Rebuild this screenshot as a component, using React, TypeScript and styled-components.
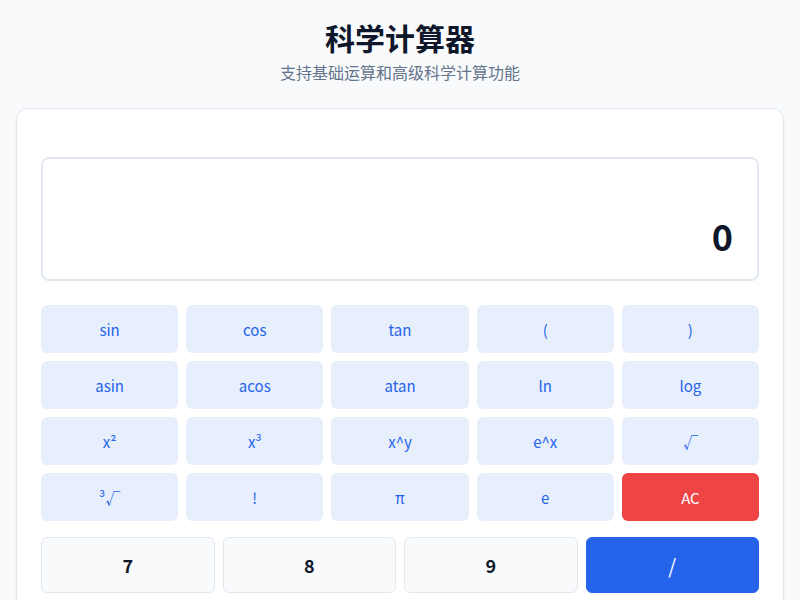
import React from 'react'
import styled, { createGlobalStyle } from 'styled-components'

const GlobalStyle = createGlobalStyle`
  html, body {
    margin: 0;
    padding: 0;
    background: #f8fafc;
    font-family: "Noto Sans CJK SC", "Noto Sans", sans-serif;
    color: #0f172a;
  }
`

type Variant = 'fn' | 'danger'

const sciKeys: { label: string; variant?: Variant }[] = [
  { label: 'sin' }, { label: 'cos' }, { label: 'tan' }, { label: '(' }, { label: ')' },
  { label: 'asin' }, { label: 'acos' }, { label: 'atan' }, { label: 'ln' }, { label: 'log' },
  { label: 'x²' }, { label: 'x³' }, { label: 'x^y' }, { label: 'e^x' }, { label: '√' },
  { label: '³√' }, { label: '!' }, { label: 'π' }, { label: 'e' }, { label: 'AC', variant: 'danger' },
]

const numKeys: { label: string; op?: boolean }[] = [
  { label: '7' }, { label: '8' }, { label: '9' }, { label: '/', op: true },
]

const App = () => {
  return (
    <Page>
      <GlobalStyle />
      <Header>
        <Title>科学计算器</Title>
        <Subtitle>支持基础运算和高级科学计算功能</Subtitle>
      </Header>
      <Card>
        <Display>
          <Value>0</Value>
        </Display>
        <SciGrid>
          {sciKeys.map(k => (
            <SciButton key={k.label} $variant={k.variant || 'fn'}>
              {k.label}
            </SciButton>
          ))}
        </SciGrid>
        <NumGrid>
          {numKeys.map(k => (
            <NumButton key={k.label} $op={!!k.op}>
              {k.label}
            </NumButton>
          ))}
        </NumGrid>
      </Card>
    </Page>
  )
}

const Page = styled.div`
  padding: 0 16px 24px;
`

const Header = styled.header`
  padding-top: 19px;
  text-align: center;
`

const Title = styled.h1`
  margin: 0;
  font-size: 30px;
  line-height: 36px;
  font-weight: 700;
  color: #0f172a;
`

const Subtitle = styled.p`
  margin: 5px 0 0;
  font-size: 16px;
  line-height: 24px;
  color: #64748b;
`

const Card = styled.section`
  margin-top: 24px;
  background: #fff;
  border: 1px solid #e2e8f0;
  border-radius: 12px;
  box-shadow: 0 1px 3px rgba(15, 23, 42, 0.06);
  padding: 48px 24px 24px;
`

const Display = styled.div`
  height: 124px;
  box-sizing: border-box;
  border: 2px solid #e2e8f0;
  border-radius: 8px;
  display: flex;
  align-items: flex-end;
  justify-content: flex-end;
  padding: 0 24px 22px;
`

const Value = styled.div`
  font-size: 36px;
  line-height: 44px;
  font-weight: 700;
  color: #0f172a;
`

const SciGrid = styled.div`
  margin-top: 24px;
  display: grid;
  grid-template-columns: repeat(5, 1fr);
  gap: 8px;
`

const SciButton = styled.button<{ $variant: Variant }>`
  height: 48px;
  border: none;
  border-radius: 6px;
  font-family: inherit;
  font-size: 15px;
  background: ${p => (p.$variant === 'danger' ? '#ef4444' : '#e7eefc')};
  color: ${p => (p.$variant === 'danger' ? '#ffffff' : '#2563eb')};
  cursor: pointer;
`

const NumGrid = styled.div`
  margin-top: 16px;
  display: grid;
  grid-template-columns: repeat(4, 1fr);
  gap: 8px;
`

const NumButton = styled.button<{ $op: boolean }>`
  height: 56px;
  border-radius: 6px;
  font-family: inherit;
  font-size: ${p => (p.$op ? '20px' : '18px')};
  font-weight: ${p => (p.$op ? 400 : 700)};
  border: 1px solid ${p => (p.$op ? '#2563eb' : '#e2e8f0')};
  background: ${p => (p.$op ? '#2563eb' : '#f8fafc')};
  color: ${p => (p.$op ? '#ffffff' : '#0f172a')};
  cursor: pointer;
`

export default App
